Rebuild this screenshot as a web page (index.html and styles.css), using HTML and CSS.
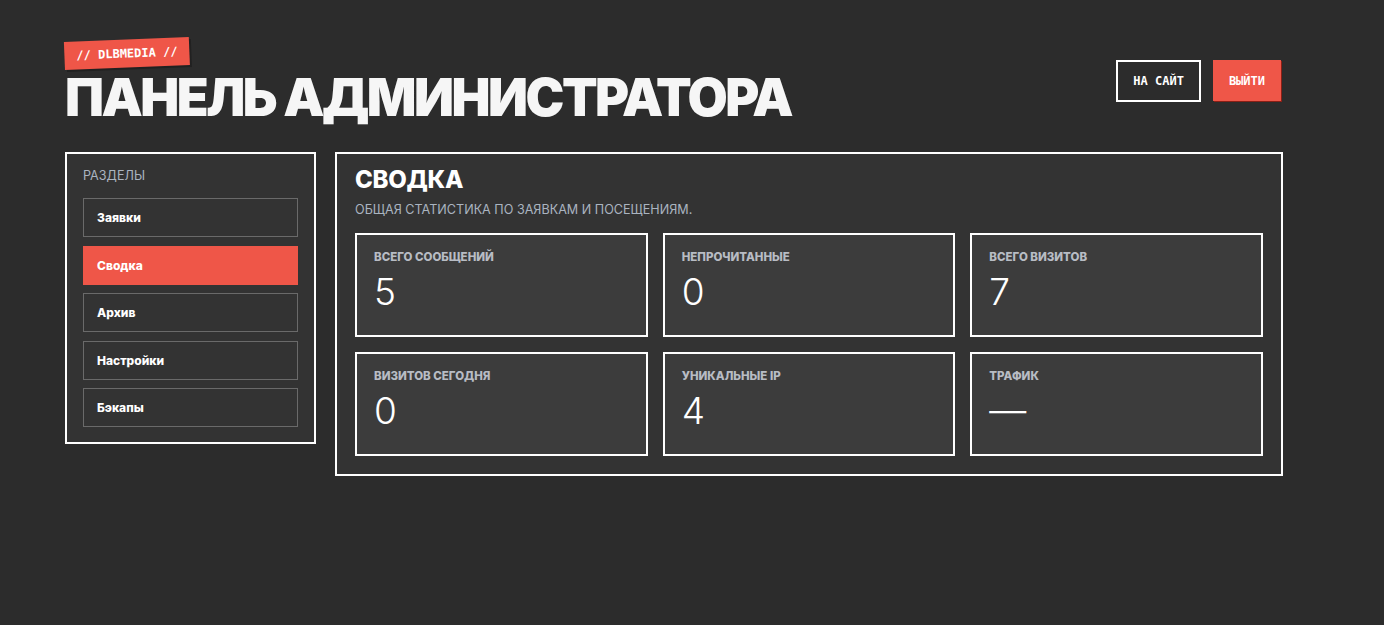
FILE: index.html
```html
<!DOCTYPE html>
<html lang="ru">

<head>
    <meta charset="UTF-8">
    <meta name="viewport" content="width=device-width, initial-scale=1.0">
    <title>Панель администратора</title>
    <link rel="stylesheet" href="styles.css">
</head>

<body>
    <div class="page">
        <header class="top">
            <div class="brand">
                <span class="tag">// DLBMEDIA //</span>
                <h1 class="title">ПАНЕЛЬ АДМИНИСТРАТОРА</h1>
            </div>
            <div class="actions">
                <a class="btn btn-outline" href="#">НА САЙТ</a>
                <a class="btn btn-red" href="#">ВЫЙТИ</a>
            </div>
        </header>

        <div class="layout">
            <aside class="sidebar">
                <div class="sidebar-title">РАЗДЕЛЫ</div>
                <nav class="nav">
                    <a class="nav-item" href="#">Заявки</a>
                    <a class="nav-item active" href="#">Сводка</a>
                    <a class="nav-item" href="#">Архив</a>
                    <a class="nav-item" href="#">Настройки</a>
                    <a class="nav-item" href="#">Бэкапы</a>
                </nav>
            </aside>

            <main class="panel">
                <h2 class="panel-title">СВОДКА</h2>
                <p class="panel-sub">ОБЩАЯ СТАТИСТИКА ПО ЗАЯВКАМ И ПОСЕЩЕНИЯМ.</p>

                <div class="stats">
                    <div class="stat">
                        <div class="stat-label">ВСЕГО СООБЩЕНИЙ</div>
                        <div class="stat-value">5</div>
                    </div>
                    <div class="stat">
                        <div class="stat-label">НЕПРОЧИТАННЫЕ</div>
                        <div class="stat-value">0</div>
                    </div>
                    <div class="stat">
                        <div class="stat-label">ВСЕГО ВИЗИТОВ</div>
                        <div class="stat-value">7</div>
                    </div>
                    <div class="stat">
                        <div class="stat-label">ВИЗИТОВ СЕГОДНЯ</div>
                        <div class="stat-value">0</div>
                    </div>
                    <div class="stat">
                        <div class="stat-label">УНИКАЛЬНЫЕ IP</div>
                        <div class="stat-value">4</div>
                    </div>
                    <div class="stat">
                        <div class="stat-label">ТРАФИК</div>
                        <div class="stat-value">—</div>
                    </div>
                </div>
            </main>
        </div>
    </div>
</body>

</html>
```

FILE: styles.css
```css
body {
    margin: 0;
    background-color: #2c2c2c;
    color: #f5f5f5;
    font-family: Inter, "Noto Sans", sans-serif;
}

a {
    text-decoration: none;
    color: inherit;
}

.page {
    width: 1218px;
    margin-left: 65px;
    padding-top: 42px;
}

/* header */

.top {
    display: flex;
    justify-content: space-between;
    align-items: flex-start;
}

.brand {
    display: flex;
    flex-direction: column;
    align-items: flex-start;
}

.tag {
    display: block;
    background-color: #ef5648;
    color: #fff;
    font-family: "DejaVu Sans Mono", "Liberation Mono", monospace;
    font-weight: bold;
    font-size: 12px;
    line-height: 14px;
    padding: 7px 12px;
    transform: rotate(-2.3deg);
    transform-origin: left bottom;
    box-shadow: 2px 2px 0 rgba(0, 0, 0, 0.25);
}

.title {
    margin: 2px 0 0;
    font-size: 52px;
    font-weight: 900;
    letter-spacing: -2.5px;
    line-height: 52px;
    color: #f6f6f6;
}

.actions {
    display: flex;
    gap: 12px;
    margin-top: 18px;
    margin-right: 2px;
}

.btn {
    display: flex;
    align-items: center;
    height: 42px;
    box-sizing: border-box;
    padding: 0 15px;
    font-family: "DejaVu Sans Mono", "Liberation Mono", monospace;
    font-weight: bold;
    font-size: 12px;
    color: #fff;
}

.btn-outline {
    border: 2px solid #fff;
}

.btn-red {
    background-color: #ef5648;
    height: 41px;
    padding: 0 16px;
    box-shadow: 1px 1px 0 #8a1f16;
}

/* layout */

.layout {
    display: flex;
    align-items: flex-start;
    gap: 19px;
    margin-top: 28px;
}

.sidebar {
    width: 251px;
    box-sizing: border-box;
    border: 2px solid #fff;
    background-color: #333;
    padding: 14px 16px 15px;
}

.sidebar-title {
    font-size: 12.6px;
    color: #aab4c0;
    margin-bottom: 15px;
    line-height: 15px;
}

.nav {
    display: flex;
    flex-direction: column;
    gap: 8.5px;
}

.nav-item {
    display: flex;
    align-items: center;
    height: 39px;
    box-sizing: border-box;
    padding-left: 13px;
    border: 1px solid #6a6a6a;
    font-size: 12px;
    font-weight: 800;
    color: #fff;
}

.nav-item.active {
    background-color: #ef5648;
    border-color: #ef5648;
}

.panel {
    flex: 1;
    border: 2px solid #fff;
    background-color: #333;
    padding: 12px 18px 18px;
}

.panel-title {
    margin: 0;
    font-size: 24px;
    font-weight: 800;
    letter-spacing: -0.3px;
    line-height: 28px;
    color: #fff;
}

.panel-sub {
    margin: 8px 0 16px;
    font-size: 12.6px;
    color: #aab4c0;
    line-height: 15px;
}

.stats {
    display: grid;
    grid-template-columns: repeat(3, 1fr);
    gap: 15px;
}

.stat {
    height: 104px;
    box-sizing: border-box;
    border: 2px solid #fff;
    background-color: #3c3c3c;
    padding: 15px 17px;
}

.stat-label {
    font-size: 11.5px;
    font-weight: 800;
    color: #b8bcc4;
    line-height: 14px;
}

.stat-value {
    margin-top: 6px;
    font-size: 37px;
    font-weight: 300;
    line-height: 44px;
    color: #fff;
}
```
